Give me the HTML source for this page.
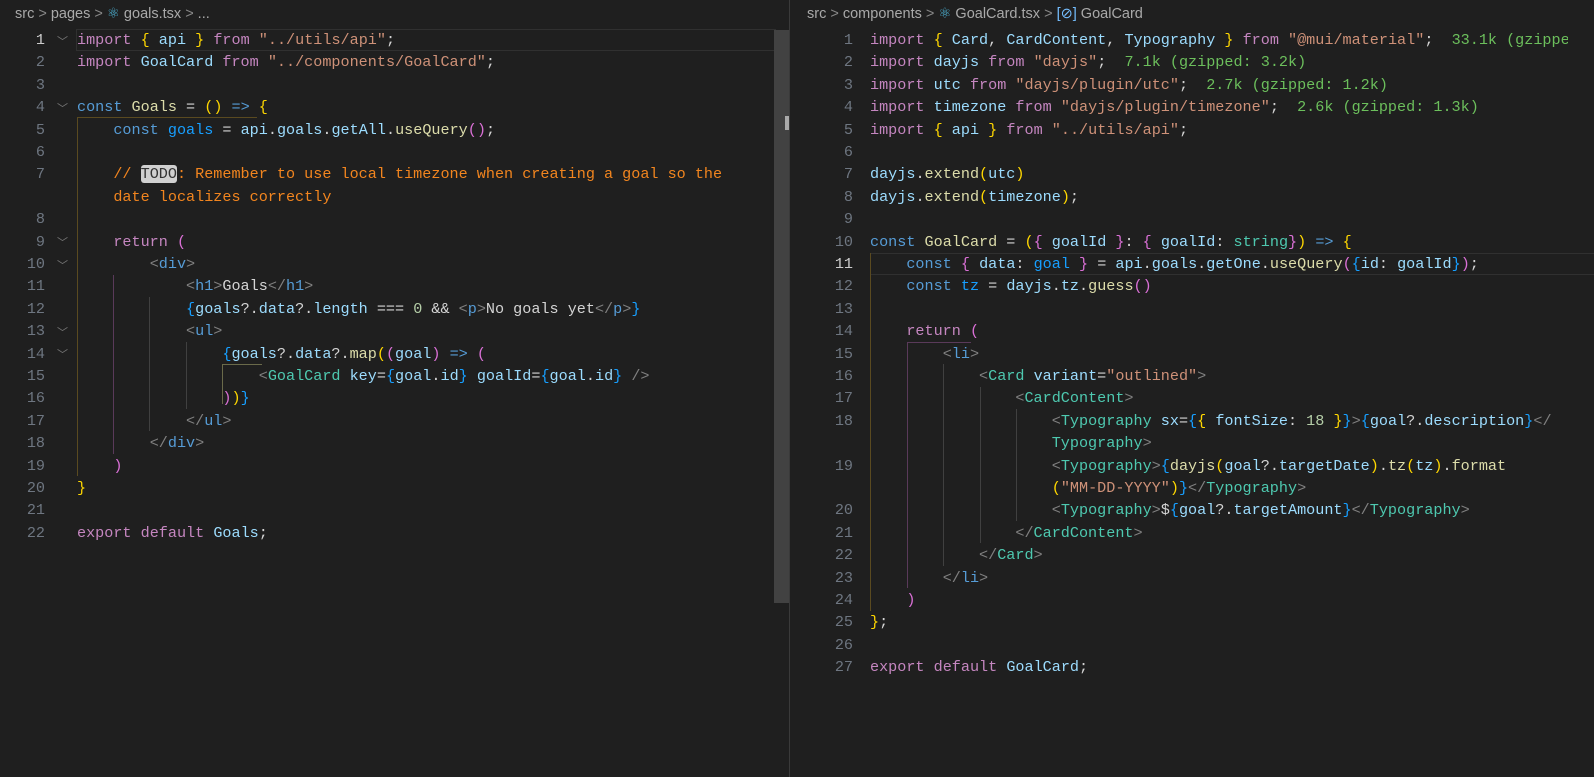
<!DOCTYPE html>
<html><head><meta charset="utf-8"><style>
*{margin:0;padding:0;box-sizing:border-box}
body{width:1594px;height:777px;background:#1f1f1f;overflow:hidden;position:relative;font-family:"Liberation Mono",monospace;font-size:15.15px;color:#d4d4d4}
.pane{position:absolute;top:0;height:777px;overflow:hidden}
.bc{position:absolute;top:6px;font-family:"Liberation Sans",sans-serif;font-size:14.5px;color:#a9a9a9;white-space:nowrap}
.row{position:absolute;height:22.4px;line-height:22.4px;white-space:pre}
.ln{position:absolute;height:22.4px;line-height:22.4px;text-align:right;width:40px;color:#6e7681}
.ln.a{color:#cccccc}
.k{color:#c586c0}.b{color:#569cd6}.v{color:#9cdcfe}.f{color:#dcdcaa}.s{color:#ce9178}.t{color:#4ec9b0}.g{color:#808080}.y{color:#ffd700}.p{color:#da70d6}.l{color:#179fff}.c{color:#f2851f}.n{color:#6cbf5c}.w{color:#d4d4d4}.num{color:#b5cea8}
.todo{background:#d0d0d0;color:#333;border-radius:3px}
.guide{position:absolute;width:1px;background:#404040}
.chev{position:absolute;color:#777;font-size:11px;font-family:"DejaVu Sans",sans-serif}
</style></head><body>

<div class="pane" style="left:0;width:786px;background:#1f1f1f">
<div class="bc" style="left:15px">src <span style="color:#888">&gt;</span> pages <span style="color:#888">&gt;</span> <span style="color:#4fb6d8">⚛</span> goals.tsx <span style="color:#888">&gt;</span> ...</div>
<div style="position:absolute;left:76px;top:29px;width:700px;height:22px;border:1px solid #303030"></div>
<div class="guide" style="left:77px;top:118px;height:358px;background:#5a4a20"></div>
<div style="position:absolute;left:77px;top:117px;width:180px;height:1px;background:#5a4a20"></div>
<div class="guide" style="left:113px;top:275px;height:179px;background:#5a3a5a"></div>
<div class="guide" style="left:149px;top:297px;height:134px"></div>
<div class="guide" style="left:186px;top:342px;height:67px"></div>
<div class="guide" style="left:222px;top:364px;height:40px;background:#6a6a4a"></div>
<div style="position:absolute;left:222px;top:364px;width:40px;height:1px;background:#6a6a4a"></div>
<div class="chev" style="left:57px;top:33px">﹀</div>
<div class="chev" style="left:57px;top:100px">﹀</div>
<div class="chev" style="left:57px;top:234px">﹀</div>
<div class="chev" style="left:57px;top:257px">﹀</div>
<div class="chev" style="left:57px;top:324px">﹀</div>
<div class="chev" style="left:57px;top:346px">﹀</div>

<div class="ln a" style="left:5px;top:29px">1</div>
<div class="ln" style="left:5px;top:51.4px">2</div>
<div class="ln" style="left:5px;top:73.8px">3</div>
<div class="ln" style="left:5px;top:96.2px">4</div>
<div class="ln" style="left:5px;top:118.6px">5</div>
<div class="ln" style="left:5px;top:141px">6</div>
<div class="ln" style="left:5px;top:163.4px">7</div>
<div class="ln" style="left:5px;top:208.2px">8</div>
<div class="ln" style="left:5px;top:230.6px">9</div>
<div class="ln" style="left:5px;top:253px">10</div>
<div class="ln" style="left:5px;top:275.4px">11</div>
<div class="ln" style="left:5px;top:297.8px">12</div>
<div class="ln" style="left:5px;top:320.2px">13</div>
<div class="ln" style="left:5px;top:342.6px">14</div>
<div class="ln" style="left:5px;top:365px">15</div>
<div class="ln" style="left:5px;top:387.4px">16</div>
<div class="ln" style="left:5px;top:409.8px">17</div>
<div class="ln" style="left:5px;top:432.2px">18</div>
<div class="ln" style="left:5px;top:454.6px">19</div>
<div class="ln" style="left:5px;top:477px">20</div>
<div class="ln" style="left:5px;top:499.4px">21</div>
<div class="ln" style="left:5px;top:521.8px">22</div>

<div class="row" style="left:77px;top:29px"><span class="k">import</span> <span class="y">{</span> <span class="v">api</span> <span class="y">}</span> <span class="k">from</span> <span class="s">"../utils/api"</span>;</div>
<div class="row" style="left:77px;top:51.4px"><span class="k">import</span> <span class="v">GoalCard</span> <span class="k">from</span> <span class="s">"../components/GoalCard"</span>;</div>
<div class="row" style="left:77px;top:96.2px"><span class="b">const</span> <span class="f">Goals</span> = <span class="y">()</span> <span class="b">=&gt;</span> <span class="y">{</span></div>
<div class="row" style="left:77px;top:118.6px">    <span class="b">const</span> <span class="l">goals</span> = <span class="v">api</span>.<span class="v">goals</span>.<span class="v">getAll</span>.<span class="f">useQuery</span><span class="p">()</span>;</div>
<div class="row" style="left:77px;top:163.4px">    <span class="c">// <span class="todo">TODO</span>: Remember to use local timezone when creating a goal so the</span></div>
<div class="row" style="left:77px;top:185.8px">    <span class="c">date localizes correctly</span></div>
<div class="row" style="left:77px;top:230.6px">    <span class="k">return</span> <span class="p">(</span></div>
<div class="row" style="left:77px;top:253px">        <span class="g">&lt;</span><span class="b">div</span><span class="g">&gt;</span></div>
<div class="row" style="left:77px;top:275.4px">            <span class="g">&lt;</span><span class="b">h1</span><span class="g">&gt;</span>Goals<span class="g">&lt;/</span><span class="b">h1</span><span class="g">&gt;</span></div>
<div class="row" style="left:77px;top:297.8px">            <span class="l">{</span><span class="v">goals</span>?.<span class="v">data</span>?.<span class="v">length</span> === <span class="num">0</span> &amp;&amp; <span class="g">&lt;</span><span class="b">p</span><span class="g">&gt;</span>No goals yet<span class="g">&lt;/</span><span class="b">p</span><span class="g">&gt;</span><span class="l">}</span></div>
<div class="row" style="left:77px;top:320.2px">            <span class="g">&lt;</span><span class="b">ul</span><span class="g">&gt;</span></div>
<div class="row" style="left:77px;top:342.6px">                <span class="l">{</span><span class="v">goals</span>?.<span class="v">data</span>?.<span class="f">map</span><span class="y">(</span><span class="p">(</span><span class="v">goal</span><span class="p">)</span> <span class="b">=&gt;</span> <span class="p">(</span></div>
<div class="row" style="left:77px;top:365px">                    <span class="g">&lt;</span><span class="t">GoalCard</span> <span class="v">key</span>=<span class="l">{</span><span class="v">goal</span>.<span class="v">id</span><span class="l">}</span> <span class="v">goalId</span>=<span class="l">{</span><span class="v">goal</span>.<span class="v">id</span><span class="l">}</span> <span class="g">/&gt;</span></div>
<div class="row" style="left:77px;top:387.4px">                <span class="p">)</span><span class="y">)</span><span class="l">}</span></div>
<div class="row" style="left:77px;top:409.8px">            <span class="g">&lt;/</span><span class="b">ul</span><span class="g">&gt;</span></div>
<div class="row" style="left:77px;top:432.2px">        <span class="g">&lt;/</span><span class="b">div</span><span class="g">&gt;</span></div>
<div class="row" style="left:77px;top:454.6px">    <span class="p">)</span></div>
<div class="row" style="left:77px;top:477px"><span class="y">}</span></div>
<div class="row" style="left:77px;top:521.8px"><span class="k">export</span> <span class="k">default</span> <span class="v">Goals</span>;</div>
</div>
<div style="position:absolute;left:774px;top:30px;width:16px;height:573px;background:#424242"></div>
<div style="position:absolute;left:785px;top:116px;width:5px;height:14px;background:#aaa"></div>
<div style="position:absolute;left:789px;top:0;width:1px;height:777px;background:#3a3a3a"></div>

<div class="pane" style="left:790px;width:804px;background:#1f1f1f">
<div class="bc" style="left:17px">src <span style="color:#888">&gt;</span> components <span style="color:#888">&gt;</span> <span style="color:#4fb6d8">⚛</span> GoalCard.tsx <span style="color:#888">&gt;</span> <span style="color:#75beff">[⊘]</span> GoalCard</div>
<div style="position:absolute;left:80px;top:253px;width:740px;height:22px;border:1px solid #303030"></div>
<div class="guide" style="left:80px;top:253px;height:358px;background:#5a4a20"></div>
<div class="guide" style="left:117px;top:342px;height:246px;background:#5a3a5a"></div>
<div style="position:absolute;left:117px;top:342px;width:64px;height:1px;background:#5a3a5a"></div>
<div class="guide" style="left:153px;top:364px;height:202px"></div>
<div class="guide" style="left:190px;top:387px;height:156px"></div>
<div class="guide" style="left:226px;top:409px;height:112px"></div>
</div>

<div style="position:absolute;left:790px;top:0;width:778px;height:777px;overflow:hidden">
<div class="ln" style="left:23px;top:29px">1</div>
<div class="ln" style="left:23px;top:51.4px">2</div>
<div class="ln" style="left:23px;top:73.8px">3</div>
<div class="ln" style="left:23px;top:96.2px">4</div>
<div class="ln" style="left:23px;top:118.6px">5</div>
<div class="ln" style="left:23px;top:141px">6</div>
<div class="ln" style="left:23px;top:163.4px">7</div>
<div class="ln" style="left:23px;top:185.8px">8</div>
<div class="ln" style="left:23px;top:208.2px">9</div>
<div class="ln" style="left:23px;top:230.6px">10</div>
<div class="ln a" style="left:23px;top:253px">11</div>
<div class="ln" style="left:23px;top:275.4px">12</div>
<div class="ln" style="left:23px;top:297.8px">13</div>
<div class="ln" style="left:23px;top:320.2px">14</div>
<div class="ln" style="left:23px;top:342.6px">15</div>
<div class="ln" style="left:23px;top:365px">16</div>
<div class="ln" style="left:23px;top:387.4px">17</div>
<div class="ln" style="left:23px;top:409.8px">18</div>
<div class="ln" style="left:23px;top:454.6px">19</div>
<div class="ln" style="left:23px;top:499.4px">20</div>
<div class="ln" style="left:23px;top:521.8px">21</div>
<div class="ln" style="left:23px;top:544.2px">22</div>
<div class="ln" style="left:23px;top:566.6px">23</div>
<div class="ln" style="left:23px;top:589px">24</div>
<div class="ln" style="left:23px;top:611.4px">25</div>
<div class="ln" style="left:23px;top:633.8px">26</div>
<div class="ln" style="left:23px;top:656.2px">27</div>

<div class="row" style="left:80px;top:29px"><span class="k">import</span> <span class="y">{</span> <span class="v">Card</span>, <span class="v">CardContent</span>, <span class="v">Typography</span> <span class="y">}</span> <span class="k">from</span> <span class="s">"@mui/material"</span>;  <span class="n">33.1k (gzipped: 10.2k)</span></div>
<div class="row" style="left:80px;top:51.4px"><span class="k">import</span> <span class="v">dayjs</span> <span class="k">from</span> <span class="s">"dayjs"</span>;  <span class="n">7.1k (gzipped: 3.2k)</span></div>
<div class="row" style="left:80px;top:73.8px"><span class="k">import</span> <span class="v">utc</span> <span class="k">from</span> <span class="s">"dayjs/plugin/utc"</span>;  <span class="n">2.7k (gzipped: 1.2k)</span></div>
<div class="row" style="left:80px;top:96.2px"><span class="k">import</span> <span class="v">timezone</span> <span class="k">from</span> <span class="s">"dayjs/plugin/timezone"</span>;  <span class="n">2.6k (gzipped: 1.3k)</span></div>
<div class="row" style="left:80px;top:118.6px"><span class="k">import</span> <span class="y">{</span> <span class="v">api</span> <span class="y">}</span> <span class="k">from</span> <span class="s">"../utils/api"</span>;</div>
<div class="row" style="left:80px;top:163.4px"><span class="v">dayjs</span>.<span class="f">extend</span><span class="y">(</span><span class="v">utc</span><span class="y">)</span></div>
<div class="row" style="left:80px;top:185.8px"><span class="v">dayjs</span>.<span class="f">extend</span><span class="y">(</span><span class="v">timezone</span><span class="y">)</span>;</div>
<div class="row" style="left:80px;top:230.6px"><span class="b">const</span> <span class="f">GoalCard</span> = <span class="y">(</span><span class="p">{</span> <span class="v">goalId</span> <span class="p">}</span>: <span class="p">{</span> <span class="v">goalId</span>: <span class="t">string</span><span class="p">}</span><span class="y">)</span> <span class="b">=&gt;</span> <span class="y">{</span></div>
<div class="row" style="left:80px;top:253px">    <span class="b">const</span> <span class="p">{</span> <span class="v">data</span>: <span class="l">goal</span> <span class="p">}</span> = <span class="v">api</span>.<span class="v">goals</span>.<span class="v">getOne</span>.<span class="f">useQuery</span><span class="p">(</span><span class="l">{</span><span class="v">id</span>: <span class="v">goalId</span><span class="l">}</span><span class="p">)</span>;</div>
<div class="row" style="left:80px;top:275.4px">    <span class="b">const</span> <span class="l">tz</span> = <span class="v">dayjs</span>.<span class="v">tz</span>.<span class="f">guess</span><span class="p">()</span></div>
<div class="row" style="left:80px;top:320.2px">    <span class="k">return</span> <span class="p">(</span></div>
<div class="row" style="left:80px;top:342.6px">        <span class="g">&lt;</span><span class="b">li</span><span class="g">&gt;</span></div>
<div class="row" style="left:80px;top:365px">            <span class="g">&lt;</span><span class="t">Card</span> <span class="v">variant</span>=<span class="s">"outlined"</span><span class="g">&gt;</span></div>
<div class="row" style="left:80px;top:387.4px">                <span class="g">&lt;</span><span class="t">CardContent</span><span class="g">&gt;</span></div>
<div class="row" style="left:80px;top:409.8px">                    <span class="g">&lt;</span><span class="t">Typography</span> <span class="v">sx</span>=<span class="l">{</span><span class="y">{</span> <span class="v">fontSize</span>: <span class="num">18</span> <span class="y">}</span><span class="l">}</span><span class="g">&gt;</span><span class="l">{</span><span class="v">goal</span>?.<span class="v">description</span><span class="l">}</span><span class="g">&lt;/</span></div>
<div class="row" style="left:80px;top:432.2px">                    <span class="t">Typography</span><span class="g">&gt;</span></div>
<div class="row" style="left:80px;top:454.6px">                    <span class="g">&lt;</span><span class="t">Typography</span><span class="g">&gt;</span><span class="l">{</span><span class="f">dayjs</span><span class="y">(</span><span class="v">goal</span>?.<span class="v">targetDate</span><span class="y">)</span>.<span class="f">tz</span><span class="y">(</span><span class="v">tz</span><span class="y">)</span>.<span class="f">format</span></div>
<div class="row" style="left:80px;top:477px">                    <span class="y">(</span><span class="s">"MM-DD-YYYY"</span><span class="y">)</span><span class="l">}</span><span class="g">&lt;/</span><span class="t">Typography</span><span class="g">&gt;</span></div>
<div class="row" style="left:80px;top:499.4px">                    <span class="g">&lt;</span><span class="t">Typography</span><span class="g">&gt;</span>$<span class="l">{</span><span class="v">goal</span>?.<span class="v">targetAmount</span><span class="l">}</span><span class="g">&lt;/</span><span class="t">Typography</span><span class="g">&gt;</span></div>
<div class="row" style="left:80px;top:521.8px">                <span class="g">&lt;/</span><span class="t">CardContent</span><span class="g">&gt;</span></div>
<div class="row" style="left:80px;top:544.2px">            <span class="g">&lt;/</span><span class="t">Card</span><span class="g">&gt;</span></div>
<div class="row" style="left:80px;top:566.6px">        <span class="g">&lt;/</span><span class="b">li</span><span class="g">&gt;</span></div>
<div class="row" style="left:80px;top:589px">    <span class="p">)</span></div>
<div class="row" style="left:80px;top:611.4px"><span class="y">}</span>;</div>
<div class="row" style="left:80px;top:656.2px"><span class="k">export</span> <span class="k">default</span> <span class="v">GoalCard</span>;</div>
</div>
</body></html>
